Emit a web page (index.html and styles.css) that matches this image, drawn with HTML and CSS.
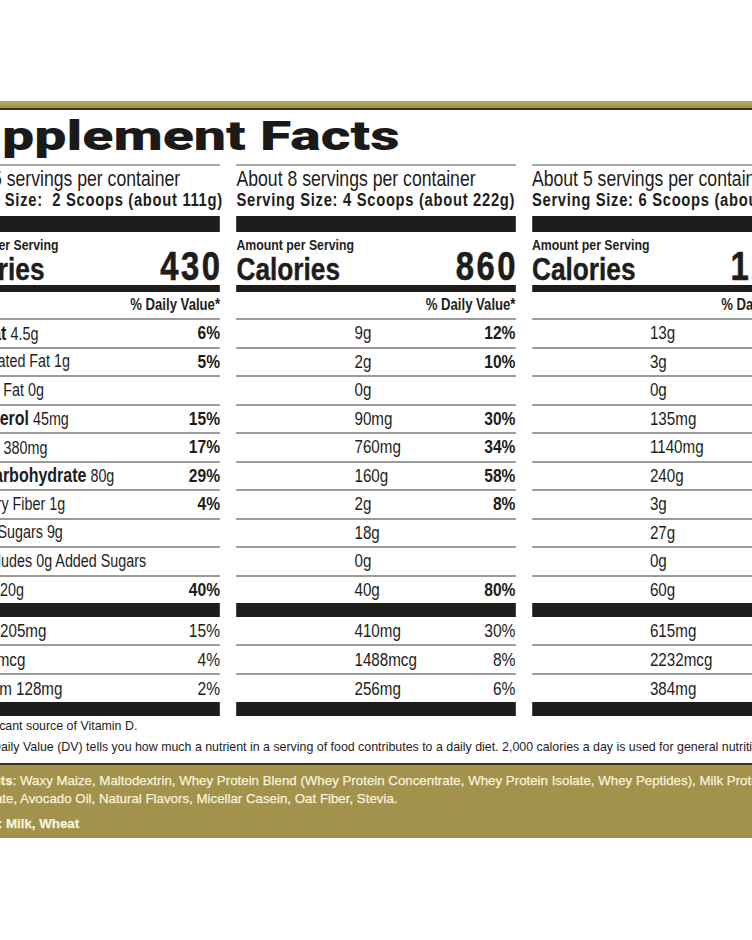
FILE: index.html
```html
<!DOCTYPE html>
<html lang="en">
<head>
<meta charset="utf-8">
<title>Supplement Facts</title>
<link rel="stylesheet" href="styles.css">
</head>
<body>
<div class="label">
  <div class="band"></div>
  <h1 class="title"><span class="title-text">Supplement Facts</span></h1>
  <div class="cols">
    <section class="col col-first">
      <div class="serv">About 5 servings per container</div>
      <div class="size">Serving Size:&nbsp; 2 Scoops (about 111g)</div>
      <div class="bar-lg"></div>
      <div class="amount">Amount per Serving</div>
      <div class="cal"><span class="cal-label">Calories</span><span class="cal-num">430</span></div>
      <div class="bar-md"></div>
      <div class="dv">% Daily Value*</div>
      <div class="row"><span class="lbl"><b>Total Fat</b> 4.5g</span><b>6%</b></div>
      <div class="row"><span class="lbl in1">Saturated Fat 1g</span><b>5%</b></div>
      <div class="row"><span class="lbl in1">Trans Fat 0g</span></div>
      <div class="row"><span class="lbl"><b>Cholesterol</b> 45mg</span><b>15%</b></div>
      <div class="row"><span class="lbl"><b>Sodium</b> 380mg</span><b>17%</b></div>
      <div class="row"><span class="lbl"><b>Total Carbohydrate</b> 80g</span><b>29%</b></div>
      <div class="row"><span class="lbl in1">Dietary Fiber 1g</span><b>4%</b></div>
      <div class="row"><span class="lbl in1">Total Sugars 9g</span></div>
      <div class="row"><span class="lbl in2">Includes 0g Added Sugars</span></div>
      <div class="row end"><span class="lbl"><b>Protein</b> 20g</span><b>40%</b></div>
      <div class="bar-sm"></div>
      <div class="row min"><span class="lbl">Calcium 205mg</span><span class="pct">15%</span></div>
      <div class="row min"><span class="lbl">Iron 744mcg</span><span class="pct">4%</span></div>
      <div class="row min end"><span class="lbl">Potassium 128mg</span><span class="pct">2%</span></div>
      <div class="bar-sm"></div>
    </section>
    <section class="col">
      <div class="serv">About 8 servings per container</div>
      <div class="size">Serving Size: 4 Scoops (about 222g)</div>
      <div class="bar-lg"></div>
      <div class="amount">Amount per Serving</div>
      <div class="cal"><span class="cal-label">Calories</span><span class="cal-num">860</span></div>
      <div class="bar-md"></div>
      <div class="dv">% Daily Value*</div>
      <div class="row"><span class="amt">9g</span><b>12%</b></div>
      <div class="row"><span class="amt">2g</span><b>10%</b></div>
      <div class="row"><span class="amt">0g</span></div>
      <div class="row"><span class="amt">90mg</span><b>30%</b></div>
      <div class="row"><span class="amt">760mg</span><b>34%</b></div>
      <div class="row"><span class="amt">160g</span><b>58%</b></div>
      <div class="row"><span class="amt">2g</span><b>8%</b></div>
      <div class="row"><span class="amt">18g</span></div>
      <div class="row"><span class="amt">0g</span></div>
      <div class="row end"><span class="amt">40g</span><b>80%</b></div>
      <div class="bar-sm"></div>
      <div class="row min"><span class="amt">410mg</span><span class="pct">30%</span></div>
      <div class="row min"><span class="amt">1488mcg</span><span class="pct">8%</span></div>
      <div class="row min end"><span class="amt">256mg</span><span class="pct">6%</span></div>
      <div class="bar-sm"></div>
    </section>
    <section class="col">
      <div class="serv">About 5 servings per container</div>
      <div class="size">Serving Size: 6 Scoops (about 333g)</div>
      <div class="bar-lg"></div>
      <div class="amount">Amount per Serving</div>
      <div class="cal"><span class="cal-label">Calories</span><span class="cal-num">1290</span></div>
      <div class="bar-md"></div>
      <div class="dv">% Daily Value*</div>
      <div class="row"><span class="amt">13g</span><b>17%</b></div>
      <div class="row"><span class="amt">3g</span><b>15%</b></div>
      <div class="row"><span class="amt">0g</span></div>
      <div class="row"><span class="amt">135mg</span><b>45%</b></div>
      <div class="row"><span class="amt">1140mg</span><b>50%</b></div>
      <div class="row"><span class="amt">240g</span><b>87%</b></div>
      <div class="row"><span class="amt">3g</span><b>11%</b></div>
      <div class="row"><span class="amt">27g</span></div>
      <div class="row"><span class="amt">0g</span></div>
      <div class="row end"><span class="amt">60g</span><b>120%</b></div>
      <div class="bar-sm"></div>
      <div class="row min"><span class="amt">615mg</span><span class="pct">45%</span></div>
      <div class="row min"><span class="amt">2232mcg</span><span class="pct">12%</span></div>
      <div class="row min end"><span class="amt">384mg</span><span class="pct">8%</span></div>
      <div class="bar-sm"></div>
    </section>
  </div>
  <div class="notes">
    <p class="note-1">†Not a significant source of Vitamin D.</p>
    <p class="note-2">*The % Daily Value (DV) tells you how much a nutrient in a serving of food contributes to a daily diet. 2,000 calories a day is used for general nutrition advice.</p>
  </div>
  <div class="ingr">
    <p><b>Ingredients</b>: Waxy Maize, Maltodextrin, Whey Protein Blend (Whey Protein Concentrate, Whey Protein Isolate, Whey Peptides), Milk Protein<br>Concentrate, Avocado Oil, Natural Flavors, Micellar Casein, Oat Fiber, Stevia.</p>
    <p class="contains">Contains: Milk, Wheat</p>
  </div>
</div>
</body>
</html>
```

FILE: styles.css
```css
html, body {
  margin: 0;
  padding: 0;
  background: #ffffff;
  overflow: hidden;
}

body {
  font-family: "Liberation Sans", Arial, sans-serif;
  color: #1e1d1b;
}

.label {
  width: 1000px;
  margin-left: -59px;
  padding-top: 101px;
}

.band {
  height: 7px;
  background: linear-gradient(#bcae68, #a18f46);
  border-bottom: 2px solid #3b3322;
}

.title {
  margin: 0 0 0 -7px;
  height: 54px;
  font-family: "Roboto", "Inter", "Liberation Sans", sans-serif;
  font-weight: 900;
  font-size: 40px;
  line-height: 54px;
  color: #1a1a1a;
  white-space: nowrap;
}

.title-text {
  display: inline-block;
  transform: scaleX(1.43);
  transform-origin: 0 50%;
}

/* the nutrition columns use a condensed face: Liberation Sans narrowed */
.cols {
  display: grid;
  grid-template-columns: 340.24px 340.24px 340.24px;
  column-gap: 20.1px;
  transform: scaleX(0.82);
  transform-origin: 0 0;
}

.col {
  border-top: 2px solid #a4a4a4;
  white-space: nowrap;
}

.serv {
  margin-top: 3px;
  font-size: 21.5px;
  line-height: 21px;
}

.size {
  font-size: 18px;
  font-weight: 700;
  line-height: 20px;
  letter-spacing: 0.85px;
}

.bar-lg {
  height: 16px;
  margin-top: 6px;
  background: #1e1d1b;
}

.amount {
  margin-top: 6px;
  font-size: 15px;
  font-weight: 700;
  line-height: 14px;
}

.cal {
  display: flex;
  justify-content: space-between;
  align-items: baseline;
  font-weight: 700;
  line-height: 28px;
}

.cal-label {
  font-size: 32px;
  -webkit-text-stroke: 0.4px #1e1d1b;
}

.cal-num {
  font-size: 40px;
  letter-spacing: 3px;
  margin-right: -3px;
  -webkit-text-stroke: 0.6px #1e1d1b;
}

.bar-md {
  height: 7px;
  margin-top: 2px;
  background: #1e1d1b;
}

.dv {
  height: 26px;
  border-bottom: 2px solid #9a9a9a;
  text-align: right;
  font-size: 16px;
  font-weight: 700;
  line-height: 26px;
}

.row {
  height: 26.5px;
  display: flex;
  align-items: center;
  justify-content: space-between;
  border-bottom: 2px solid #9a9a9a;
  font-size: 17.5px;
}

.row.min {
  height: 27px;
  font-size: 18.5px;
}

.row.end {
  border-bottom: none;
}

.row > b,
.pct {
  font-size: 19px;
}

.lbl b {
  font-size: 19.5px;
}

.in1 {
  padding-left: 27px;
}

.in2 {
  padding-left: 46px;
}

.amt {
  margin-left: 143.9px;
  font-size: 18.5px;
}

.bar-sm {
  height: 14px;
  background: #1e1d1b;
}

.notes {
  font-size: 12.4px;
  line-height: 21px;
  white-space: nowrap;
}

.notes p {
  margin: 0;
}

.notes .note-1 {
  margin-left: -13.5px;
}

.notes .note-2 {
  margin-left: 6.9px;
}

.ingr {
  margin-top: 5px;
  padding: 7px 0 5px;
  border-top: 2px solid #3b3322;
  background: #a3924b;
  color: #f6f2de;
  font-size: 13.3px;
  line-height: 18px;
  white-space: nowrap;
  -webkit-text-stroke: 0.25px #f6f2de;
}

.ingr p {
  margin: 0;
}

.ingr .contains {
  margin-top: 7px;
  font-weight: 700;
}
```
